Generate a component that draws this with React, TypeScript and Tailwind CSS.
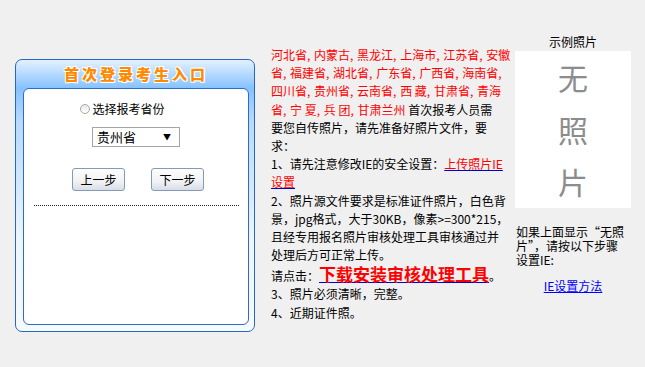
import type { ReactNode } from "react";

const provinceRows = [
  { items: ["河北省", "内蒙古", "黑龙江", "上海市", "江苏省", "安徽"], trailing: false },
  { items: ["省", "福建省", "湖北省", "广东省", "广西省", "海南省"], trailing: true },
  { items: ["四川省", "贵州省", "云南省", "西 藏", "甘肃省", "青海"], trailing: false },
];

function Sep() {
  return <span className="pr-[1px]">, </span>;
}

function Line({ children, className = "" }: { children: ReactNode; className?: string }) {
  return <div className={`whitespace-nowrap ${className}`}>{children}</div>;
}

function ProvinceList({ items, trailing }: { items: string[]; trailing: boolean }) {
  return (
    <>
      {items.map((name, i) => (
        <span key={name}>
          {name}
          {i < items.length - 1 || trailing ? <Sep /> : null}
        </span>
      ))}
    </>
  );
}

function LoginPanel() {
  return (
    <div className="flex h-[273px] w-[240px] flex-col rounded-[7px] border border-[#2468c4] bg-[linear-gradient(#e4f1ff,#86c2ff_28px,#b6d9fc_60px,#eef5fd_180px,#f6f9fd)] pb-[6px] pl-[7px] pr-[5px]">
      <div className="flex h-[28px] items-center justify-center">
        <span className="text-[15px] font-black tracking-[3px] text-[#ff8a00] [text-shadow:0_0_1px_#fff,1px_1px_0_#fff,-1px_-1px_0_#fff,1px_-1px_0_#fff,-1px_1px_0_#fff]">
          首次登录考生入口
        </span>
      </div>
      <div className="flex flex-1 flex-col items-center rounded-[6px] border-[1.5px] border-[#2a6cc6] bg-white">
        <label className="mt-[13px] flex items-center pr-[27px] text-[12px] leading-[14px] text-black">
          <span className="mr-[2px] inline-block h-[10px] w-[10px] rounded-full border border-[#a8a8a8] bg-[linear-gradient(#e8e8e8,#fff)]" />
          选择报考省份
        </label>
        <div className="mt-[11px] flex h-[20px] w-[88px] items-center justify-between border border-[#a5a5a5] bg-white pl-[4px] pr-[8px] text-[13px] text-black">
          <span>贵州省</span>
          <span className="text-[8px]">▼</span>
        </div>
        <div className="mt-[21px] flex gap-[26px] pl-[4px]">
          <button className="h-[23px] w-[53px] rounded-[3px] border border-[#7f9db9] bg-[linear-gradient(#fdfdfd,#f1f2f5_60%,#d9dde6)] text-[12px] text-black">
            上一步
          </button>
          <button className="h-[23px] w-[53px] rounded-[3px] border border-[#7f9db9] bg-[linear-gradient(#fdfdfd,#f1f2f5_60%,#d9dde6)] text-[12px] text-black">
            下一步
          </button>
        </div>
        <div className="mt-[14px] w-[205px] border-t border-dotted border-[#222]" />
      </div>
    </div>
  );
}

function Notice() {
  return (
    <div className="w-[238px] text-[12px] leading-[18.2px] text-black">
      {provinceRows.map((row, i) => (
        <Line key={i} className="text-[#ff0000]">
          <ProvinceList items={row.items} trailing={row.trailing} />
        </Line>
      ))}
      <Line>
        <span className="text-[#ff0000]">
          <ProvinceList items={["省", "宁 夏", "兵 团", "甘肃兰州"]} trailing={false} />
        </span>{" "}
        首次报考人员需
      </Line>
      <Line>要您自传照片，请先准备好照片文件，要</Line>
      <Line>求：</Line>
      <Line>
        1、请先注意修改IE的安全设置：
        <a className="text-[#ff0000] underline decoration-[#0000cc]">上传照片IE</a>
      </Line>
      <Line>
        <a className="text-[#ff0000] underline decoration-[#0000cc]">设置</a>
      </Line>
      <Line>2、照片源文件要求是标准证件照片，白色背</Line>
      <Line>景，jpg格式，大于30KB，像素&gt;=300*215，</Line>
      <Line>且经专用报名照片审核处理工具审核通过并</Line>
      <Line>处理后方可正常上传。</Line>
      <Line className="leading-[19px]">
        请点击：
        <a className="text-[17px] font-bold text-[#ff0000] underline decoration-[#0000cc]">下载安装审核处理工具</a>。
      </Line>
      <Line>3、照片必须清晰，完整。</Line>
      <Line>4、近期证件照。</Line>
    </div>
  );
}

function SamplePhoto() {
  return (
    <div className="flex w-[116px] flex-col items-center text-[12px] leading-[14px] text-black">
      <div>示例照片</div>
      <div className="mt-[2px] flex h-[157px] w-[116px] flex-col items-center bg-white text-[30px] leading-[52px] text-[#8c8c8c]">
        <span>无</span>
        <span>照</span>
        <span>片</span>
      </div>
      <div className="mt-[17px] w-[116px] pl-[1px]">
        如果上面显示“无照
        <br />
        片”，请按以下步骤
        <br />
        设置IE:
      </div>
      <a className="mt-[12px] text-[#0000ff] underline">IE设置方法</a>
    </div>
  );
}

export default function App() {
  return (
    <div className="flex h-[367px] w-[645px] items-start bg-[#f0f0f0] font-['Noto_Sans_CJK_SC',sans-serif]">
      <div className="ml-[15px] mt-[59px]">
        <LoginPanel />
      </div>
      <div className="ml-[16px] mt-[46px]">
        <Notice />
      </div>
      <div className="ml-[6px] mt-[35px]">
        <SamplePhoto />
      </div>
    </div>
  );
}
